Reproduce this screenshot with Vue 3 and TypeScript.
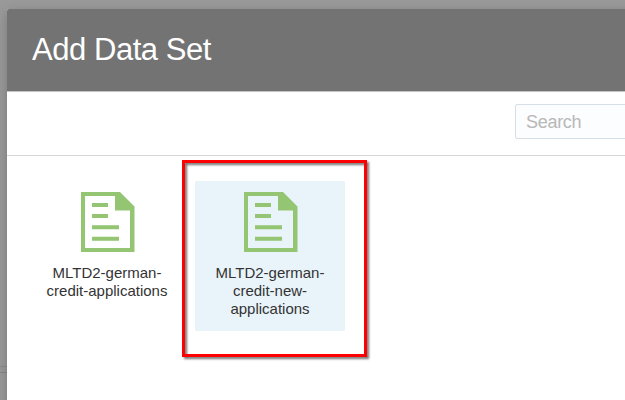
<script setup lang="ts">
interface DataSet {
  id: number
  lines: string[]
  selected: boolean
}

const dataSets: DataSet[] = [
  { id: 1, lines: ['MLTD2-german-', 'credit-applications'], selected: false },
  { id: 2, lines: ['MLTD2-german-', 'credit-new-', 'applications'], selected: true },
]
</script>

<template>
  <div class="backdrop">
    <div class="page-strip"></div>
    <section class="dialog">
      <header class="header"><h1 class="title">Add Data Set</h1></header>
      <div class="toolbar">
        <input class="search" type="text" placeholder="Search" />
      </div>
      <div class="grid">
        <div v-for="item in dataSets" :key="item.id" class="tile" :class="{ selected: item.selected }">
          <svg class="icon" width="54" height="60" viewBox="0 0 54 60">
            <path
              fill="#93c572"
              fill-rule="evenodd"
              d="M0 0H39L53.5 14.5V60H0ZM4 4V56H49V18.5H34V4Z"
            />
            <path fill="#93c572" d="M11 11H27V15H11ZM11 22H27V26H11ZM11 33.3H38V37.3H11ZM11 44.8H38V48.8H11Z" />
          </svg>
          <div class="label">
            <div v-for="line in item.lines" :key="line">{{ line }}</div>
          </div>
        </div>
      </div>
    </section>
    <div class="highlight"></div>
  </div>
</template>

<style>
body {
  margin: 0;
  overflow: hidden;
}
</style>

<style scoped>
.backdrop {
  position: relative;
  box-sizing: border-box;
  width: 625px;
  height: 400px;
  padding: 9px 0 0 7px;
  overflow: hidden;
  background: #999;
  font-family: "Liberation Sans", Arial, sans-serif;
}

.page-strip {
  position: absolute;
  left: 0;
  top: 366px;
  width: 7px;
  height: 5px;
  border-top: 1px solid #858b91;
  border-bottom: 1px solid #858585;
}

.dialog {
  position: relative;
  width: 700px;
  height: 420px;
  background: #fff;
  border-radius: 2px 0 0 0;
  box-shadow: 0 4px 12px rgba(0, 0, 0, 0.22);
}

.header {
  box-sizing: border-box;
  height: 83px;
  padding: 23px 0 0 25px;
  background: #737373;
  border-bottom: 1px solid #c4c4c4;
  border-radius: 2px 0 0 0;
}

.title {
  margin: 0;
  color: #fff;
  font-size: 31px;
  font-weight: 400;
  line-height: 36px;
  letter-spacing: -0.45px;
}

.toolbar {
  box-sizing: border-box;
  height: 64px;
  padding: 12px 0 0 508px;
  border-bottom: 1px solid #d6d7d8;
}

.search {
  display: block;
  box-sizing: border-box;
  width: 180px;
  height: 35px;
  margin: 0;
  padding: 1px 11px 0 10px;
  border: 1px solid #d5dfe7;
  border-radius: 2px;
  background: #fcfdfe;
  font: 18px "Liberation Sans", Arial, sans-serif;
  letter-spacing: -0.3px;
}

.search::placeholder {
  color: #b8b8b8;
}

.grid {
  display: flex;
  gap: 13px;
  padding: 25px 0 0 25px;
}

.tile {
  box-sizing: border-box;
  display: flex;
  flex-direction: column;
  align-items: center;
  width: 150px;
  height: 150px;
  padding-top: 11px;
  border-radius: 1px;
}

.tile.selected {
  background: #e8f3fa;
}

.icon {
  display: block;
  margin-left: 2px;
}

.label {
  margin-top: 12px;
  color: #333;
  font-size: 15px;
  line-height: 18px;
  text-align: center;
  white-space: nowrap;
}

.highlight {
  position: absolute;
  box-sizing: border-box;
  left: 182px;
  top: 160px;
  width: 185px;
  height: 197px;
  border: 3px solid #f00;
  filter: drop-shadow(2px 2px 1.3px rgba(0, 0, 0, 0.55));
}
</style>
